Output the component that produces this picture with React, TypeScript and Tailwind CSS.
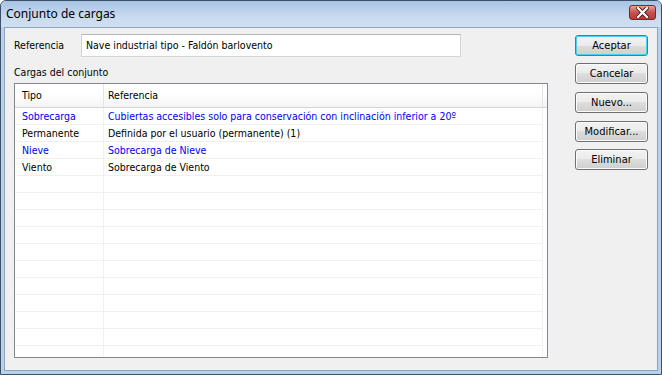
import React from "react";

const ui = { fontFamily: "Tahoma, 'DejaVu Sans Condensed', 'DejaVu Sans', sans-serif" };
const title = { fontFamily: "'Noto Sans', 'Open Sans', sans-serif" };

const rows = [
    { tipo: "Sobrecarga", ref: "Cubiertas accesibles solo para conservación con inclinación inferior a 20º", blue: true },
    { tipo: "Permanente", ref: "Definida por el usuario (permanente) (1)", blue: false },
    { tipo: "Nieve", ref: "Sobrecarga de Nieve", blue: true },
    { tipo: "Viento", ref: "Sobrecarga de Viento", blue: false },
];

const fillers = Array.from({ length: 11 });

function Button({ label, primary, className }: { label: string; primary?: boolean; className?: string }) {
    return (
        <button
            className={`w-[73px] h-[21px] rounded-[3px] border text-[11px] leading-none text-black bg-[linear-gradient(#f2f2f2_0%,#ebebeb_50%,#dddddd_50%,#cfcfcf_100%)] ${primary ? "border-[#3c7fb1] shadow-[inset_0_0_0_1px_#48d2f6]" : "border-[#707070] shadow-[inset_0_0_0_1px_#fbfbfb]"} ${className ?? ""}`}
        >
            {label}
        </button>
    );
}

export default function App() {
    return (
        <div className="w-[662px] h-[375px] bg-[#b9d1ea] border border-[#3c4f66] rounded-t-[6px] flex flex-col overflow-hidden" style={ui}>
            {/* title bar */}
            <div className="h-[26px] flex items-center justify-between pl-[5px] pr-[5px] bg-[linear-gradient(#a7c3e5,#c8daef_60%,#cfe0f2)]">
                <span className="text-[12px] text-black" style={title}>Conjunto de cargas</span>
                <div className="w-[27px] h-[15px] mt-[-4px] rounded-[3px] border border-[#6e2b2b] bg-[linear-gradient(#e8a493,#c75050_50%,#b83d2f)] flex items-center justify-center">
                    <svg width="13" height="11" viewBox="0 0 13 11">
                        <path d="M2 1 L11 10 M11 1 L2 10" stroke="#4a1a1a" strokeWidth="4" strokeLinecap="square" />
                        <path d="M2 1 L11 10 M11 1 L2 10" stroke="#ffffff" strokeWidth="2.2" strokeLinecap="square" />
                    </svg>
                </div>
            </div>

            {/* client */}
            <div className="flex-1 mx-[3px] mb-[3px] bg-[#f0f0f0] border border-[#8aa3c1] flex pl-[9px] pt-[6px] text-[10.5px]">
                <div className="w-[534px] flex flex-col">
                    <div className="h-[23px] flex items-center text-black">
                        <span className="w-[67px]">Referencia</span>
                        <div className="w-[380px] h-[23px] bg-white border border-[#d5d5d5] border-t-[#b5b5b5] flex items-center pl-[4px]">
                            Nave industrial tipo - Faldón barlovento
                        </div>
                    </div>
                    <div className="mt-[9px] leading-[13px] text-black">Cargas del conjunto</div>

                    <div className="mt-[4px] h-[275px] bg-white border border-[#828790] overflow-hidden">
                        <div className="h-[24px] flex text-black bg-[linear-gradient(#ffffff,#ffffff_40%,#f3f4f6)] border-b border-[#d5d5d5]">
                            <div className="w-[89px] pl-[7px] pt-[1px] flex items-center border-r border-[#e3e5e8]">Tipo</div>
                            <div className="w-[439px] pl-[4px] pt-[1px] flex items-center border-r border-[#e3e5e8]">Referencia</div>
                        </div>
                        {rows.map((r) => (
                            <div key={r.tipo} className={`h-[17px] flex ${r.blue ? "text-[#0000ff]" : "text-black"}`}>
                                <div className="w-[89px] pl-[7px] pt-[1px] flex items-center border-r border-b border-[#f0f0f0]">{r.tipo}</div>
                                <div className="w-[439px] pl-[4px] pt-[1px] flex items-center border-r border-b border-[#f0f0f0] whitespace-nowrap">{r.ref}</div>
                            </div>
                        ))}
                        {fillers.map((_, i) => (
                            <div key={i} className="h-[17px] flex">
                                <div className="w-[89px] border-r border-b border-[#f0f0f0]" />
                                <div className="w-[439px] border-r border-b border-[#f0f0f0]" />
                            </div>
                        ))}
                    </div>
                </div>

                <div className="ml-[27px] flex flex-col pt-[1px]">
                    <Button label="Aceptar" primary />
                    <Button label="Cancelar" className="mt-[7px]" />
                    <Button label="Nuevo..." className="mt-[8px]" />
                    <Button label="Modificar..." className="mt-[8px]" />
                    <Button label="Eliminar" className="mt-[7px]" />
                </div>
            </div>
        </div>
    );
}
